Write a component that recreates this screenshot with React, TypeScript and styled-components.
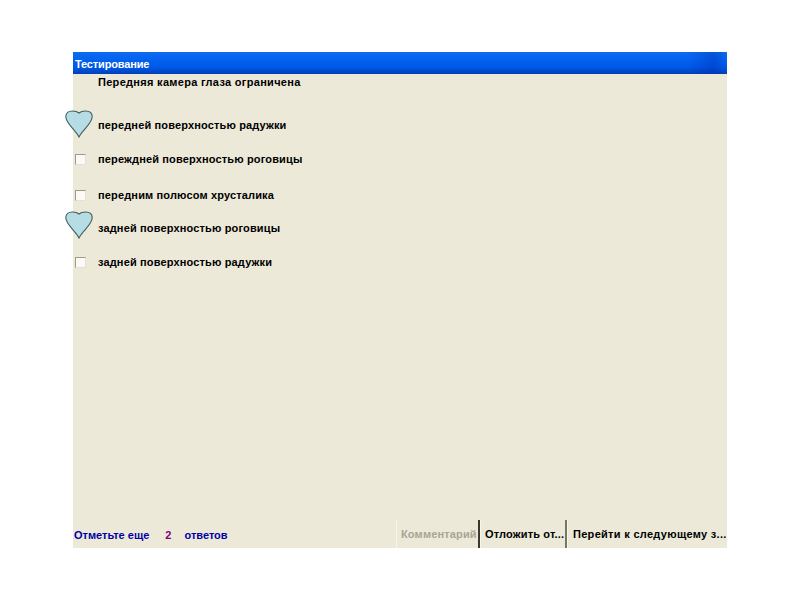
import * as React from 'react';
import styled, { createGlobalStyle } from 'styled-components';

const GlobalStyle = createGlobalStyle`
    html, body {
        margin: 0;
        background: #ffffff;
    }
`;

const Page = styled.div`
    width: 800px;
    height: 600px;
    padding: 52px 73px;
    box-sizing: border-box;
    font-family: 'Liberation Sans', Arial, sans-serif;
    font-size: 11px;
    font-weight: bold;
`;

const Window = styled.div`
    width: 654px;
    height: 496px;
    display: flex;
    flex-direction: column;
    background: #ece9d8;
`;

const TitleBar = styled.div`
    height: 22px;
    display: flex;
    align-items: center;
    padding: 2px 0 0 2px;
    box-sizing: border-box;
    color: #ffffff;
    letter-spacing: -0.15px;
    background:
        linear-gradient(to right, transparent 94%, rgba(0, 40, 170, 0.35) 98%, transparent 100%),
        linear-gradient(
            to bottom,
            #0f6af0 0%,
            #0463f0 30%,
            #0058e8 70%,
            #0040b4 100%
        );
`;

const Content = styled.div`
    flex: 1;
    display: flex;
    flex-direction: column;
    letter-spacing: 0.15px;
`;

const Question = styled.div`
    height: 16px;
    line-height: 16px;
    padding-left: 25px;
    letter-spacing: 0.3px;
    color: #000000;
`;

const Answer = styled.div<{ $gap: number }>`
    position: relative;
    height: 16px;
    display: flex;
    align-items: center;
    margin-top: ${(p) => p.$gap}px;
    color: #000000;
`;

const Check = styled.span`
    width: 11px;
    height: 11px;
    margin-left: 2px;
    margin-right: 12px;
    box-sizing: border-box;
    background: #fbfaf6;
    border: 1px solid;
    border-color: #9c998c #e4e1d2 #e4e1d2 #9c998c;
`;

const HeartMark = styled.svg<{ $lift: number }>`
    position: absolute;
    left: -8px;
    top: -${(p) => p.$lift}px;
    width: 28px;
    height: 28px;
`;

const Footer = styled.div`
    height: 28px;
    display: flex;
    align-items: stretch;
`;

const Status = styled.div`
    flex: 1;
    display: flex;
    align-items: center;
    padding: 1px 0 0 1px;
    color: #0000a8;
`;

const Count = styled.span`
    margin: 0 13px 0 16px;
    color: #800080;
`;

const ActionButton = styled.div<{ $width: number; $inset: number; $spacing: number; $disabled?: boolean }>`
    width: ${(p) => p.$width}px;
    display: flex;
    align-items: center;
    padding-left: ${(p) => p.$inset}px;
    box-sizing: border-box;
    white-space: nowrap;
    overflow: hidden;
    letter-spacing: ${(p) => p.$spacing}px;
    color: ${(p) => (p.$disabled ? '#a7a596' : '#000000')};
    border-left: 1px solid #f8f6ec;
    border-right: ${(p) => (p.$disabled ? '2px solid #3a382e' : '2px solid #77746a')};

    &:last-child {
        border-right: none;
    }
`;

const Heart = ({ lift }: { lift: number }) => (
    <HeartMark $lift={lift} viewBox="0 0 28 28">
        <path
            d="M14 27 C11 20.5 0.8 13.5 0.8 6.8 C0.8 3 3.6 1 7.5 1 C10.2 1 12.4 1.6 14 3 C15.6 1.6 17.8 1 20.5 1 C24.4 1 27.2 3 27.2 6.8 C27.2 13.5 17 20.5 14 27 Z"
            fill="#b5dde3"
            stroke="#3f5f60"
            strokeWidth="1.1"
        />
    </HeartMark>
);

const answers = [
    { text: 'передней поверхностью радужки', gap: 27, lift: 7 },
    { text: 'переждней поверхностью роговицы', gap: 18 },
    { text: 'передним полюсом хрусталика', gap: 20 },
    { text: 'задней поверхностью роговицы', gap: 17, lift: 9 },
    { text: 'задней поверхностью радужки', gap: 18 }
];

export default function App() {
    return (
        <Page>
            <GlobalStyle />
            <Window>
                <TitleBar>Тестирование</TitleBar>
                <Content>
                    <Question>Передняя камера глаза ограничена</Question>
                    {answers.map((a) => (
                        <Answer key={a.text} $gap={a.gap}>
                            <Check />
                            {a.text}
                            {a.lift !== undefined && <Heart lift={a.lift} />}
                        </Answer>
                    ))}
                </Content>
                <Footer>
                    <Status>
                        Отметьте еще<Count>2</Count>ответов
                    </Status>
                    <ActionButton $width={84} $inset={4} $spacing={0.15} $disabled>
                        Комментарий
                    </ActionButton>
                    <ActionButton $width={87} $inset={4} $spacing={0.15}>
                        Отложить от...
                    </ActionButton>
                    <ActionButton $width={160} $inset={5} $spacing={0.3}>
                        Перейти к следующему з...
                    </ActionButton>
                </Footer>
            </Window>
        </Page>
    );
}
